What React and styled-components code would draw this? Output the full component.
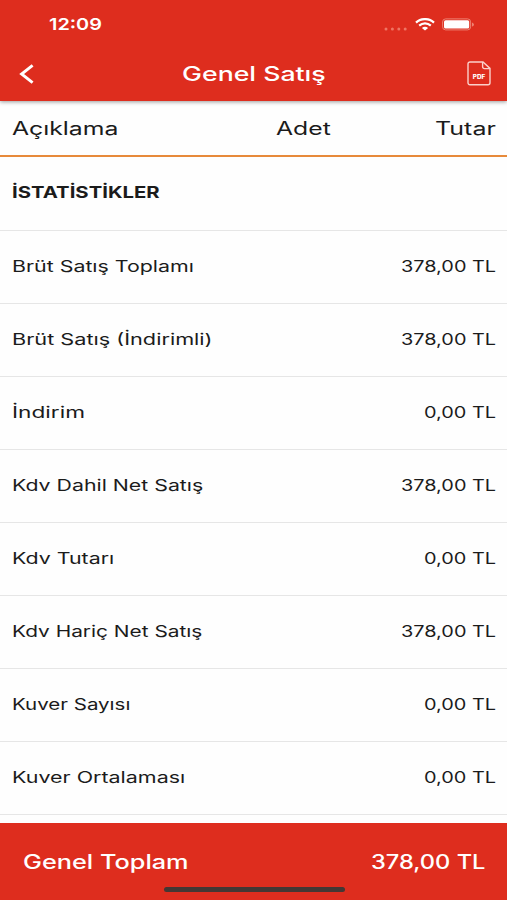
import React, { useLayoutEffect, useRef, useState } from "react";
import styled, { createGlobalStyle } from "styled-components";

const RED = "#de2d1e";

const rows = [
  { id: 1, title: "Brüt Satış Toplamı", width: 182, total: "378,00 TL" },
  { id: 2, title: "Brüt Satış (İndirimli)", width: 200, total: "378,00 TL" },
  { id: 3, title: "İndirim", width: 73, total: "0,00 TL" },
  { id: 4, title: "Kdv Dahil Net Satış", width: 191, total: "378,00 TL" },
  { id: 5, title: "Kdv Tutarı", width: 102, total: "0,00 TL" },
  { id: 6, title: "Kdv Hariç Net Satış", width: 191, total: "378,00 TL" },
  { id: 7, title: "Kuver Sayısı", width: 119, total: "0,00 TL" },
  { id: 8, title: "Kuver Ortalaması", width: 173, total: "0,00 TL" }
];

// Wide lettering: stretches the text horizontally to the given width
const WideText = ({ width, origin = "left", children, ...rest }) => {
  const ref = useRef(null);
  const [scale, setScale] = useState(1);

  useLayoutEffect(() => {
    setScale(width / ref.current.offsetWidth);
  }, [width, children]);

  return (
    <Text
      ref={ref}
      $origin={origin}
      style={{ transform: `scaleX(${scale})` }}
      {...rest}
    >
      {children}
    </Text>
  );
};

const StatusBar = () => (
  <Status>
    <WideText width={53} $size={16.5} $weight={600}>12:09</WideText>
    <StatusIcons>
      <svg width="24" height="4" viewBox="0 0 24 4" fill="#ef7564">
        <circle cx="2" cy="2" r="1.5" />
        <circle cx="8.4" cy="2" r="1.5" />
        <circle cx="14.8" cy="2" r="1.5" />
        <circle cx="21.2" cy="2" r="1.5" />
      </svg>
      <svg width="20" height="13" viewBox="0 0 20 13" fill="none" stroke="#fff">
        <path d="M1 4.6C6-.1 14-.1 19 4.6" strokeWidth="2.2" />
        <path d="M4.2 7.6c3.3-3 8.3-3 11.6 0" strokeWidth="2.1" />
        <path d="M6.9 9.9c1.8-1.6 4.4-1.6 6.2 0L10 12.6z" fill="#fff" stroke="none" />
      </svg>
      <svg width="33" height="13" viewBox="0 0 33 13">
        <rect x="0.6" y="0.9" width="28" height="11" rx="3" fill="none" stroke="#ee8273" strokeWidth="1" />
        <rect x="2" y="2.2" width="25.2" height="8.4" rx="1.6" fill="#fff" />
        <path d="M30 4.4c2.6.8 2.6 3.4 0 4.2z" fill="#ee8273" />
      </svg>
    </StatusIcons>
  </Status>
);

export default function App() {
  return (
    <>
      <GlobalStyle />
      <Screen>
        <Header>
          <StatusBar />
          <NavBar>
            <IconButton aria-label="Geri">
              <svg width="16" height="20" viewBox="0 0 16 20" fill="none" stroke="#fff" strokeWidth="2.9">
                <path d="M13.6 1.4 2.6 10l11 8.6" />
              </svg>
            </IconButton>
            <WideText width={144} origin="center" $size={20} $weight={450}>Genel Satış</WideText>
            <IconButton aria-label="PDF">
              <svg width="24" height="25" viewBox="0 0 24 25" fill="none" stroke="#fbd0ca" strokeWidth="1.4">
                <path d="M3 1h13l7 6.4V21.8a2 2 0 0 1-2 2H3a2 2 0 0 1-2-2V3a2 2 0 0 1 2-2Z" />
                <path d="M15.6 1v4.8a1.8 1.8 0 0 0 1.8 1.8H23" />
                <text x="12" y="17.8" textAnchor="middle" textLength="12.5" lengthAdjust="spacingAndGlyphs" fontFamily="Inter, sans-serif" fontWeight="800" fontSize="6" fill="#fff" stroke="none">PDF</text>
              </svg>
            </IconButton>
          </NavBar>
        </Header>
        <TableHead>
          <WideText width={106} $size={18}>Açıklama</WideText>
          <WideText width={55} $size={18}>Adet</WideText>
          <WideText width={61} origin="right" $size={18}>Tutar</WideText>
        </TableHead>
        <List>
          <Row>
            <WideText width={148} $weight={700}>İSTATİSTİKLER</WideText>
          </Row>
          {rows.map(row => (
            <Row key={row.id}>
              <WideText width={row.width}>{row.title}</WideText>
              <WideText width={row.total === "0,00 TL" ? 72 : 95} origin="right">
                {row.total}
              </WideText>
            </Row>
          ))}
        </List>
        <Footer>
          <WideText width={166} $size={19.5} $weight={450}>Genel Toplam</WideText>
          <WideText width={114} origin="right" $size={19.5} $weight={450}>378,00 TL</WideText>
          <HomeIndicator />
        </Footer>
      </Screen>
    </>
  );
}

const GlobalStyle = createGlobalStyle`
  * {
    box-sizing: border-box;
  }
  body {
    margin: 0;
    background: #fff;
    font-family: Inter, "Liberation Sans", sans-serif;
  }
`;

const Screen = styled.div`
  display: flex;
  flex-direction: column;
  width: 507px;
  height: 900px;
  overflow: hidden;
  background: #fefefe;
  color: #1b1b1b;
`;

const Text = styled.span`
  display: inline-block;
  white-space: nowrap;
  font-size: ${p => p.$size || 15.5}px;
  font-weight: ${p => p.$weight || 420};
  line-height: 24px;
  transform-origin: ${p => p.$origin} center;
`;

const Header = styled.header`
  z-index: 1;
  flex: none;
  height: 101px;
  background: ${RED};
  color: #fff;
  box-shadow: 0 1px 4px rgba(0, 0, 0, 0.4);
`;

const Status = styled.div`
  display: flex;
  align-items: center;
  justify-content: space-between;
  height: 48px;
  padding: 0 32px 0 49px;
`;

const StatusIcons = styled.div`
  display: flex;
  align-items: center;
  gap: 7px;

  & > svg:first-child {
    margin-top: 9px;
  }
`;

const NavBar = styled.div`
  display: grid;
  grid-template-columns: 60px 1fr 60px;
  align-items: center;
  justify-items: center;
  height: 51px;
  padding-left: 1px;
`;

const IconButton = styled.button`
  display: flex;
  padding: 0;
  border: 0;
  background: none;

  &:first-child {
    justify-self: start;
    margin-left: 18px;
  }
  &:last-child {
    justify-self: end;
    margin-right: 16px;
  }
`;

const TableHead = styled.div`
  display: grid;
  grid-template-columns: 264px 1fr auto;
  align-items: center;
  justify-items: start;
  flex: none;
  height: 56px;
  padding: 1px 11px 0 12px;
  border-bottom: 2px solid #e78a3a;
`;

const List = styled.div`
  flex: 1;
  overflow: hidden;
`;

const Row = styled.div`
  display: flex;
  align-items: center;
  justify-content: space-between;
  height: 73px;
  padding: 0 11px 1px 12px;
  border-bottom: 1px solid #e6e6e6;

  &:first-child {
    height: 74px;
  }
`;

const Footer = styled.footer`
  position: relative;
  display: flex;
  justify-content: space-between;
  flex: none;
  height: 77px;
  padding: 27px 22px 0 23px;
  background: ${RED};
  color: #fff;
`;

const HomeIndicator = styled.div`
  position: absolute;
  left: 164px;
  bottom: 8px;
  width: 181px;
  height: 5px;
  border-radius: 3px;
  background: #443734;
`;
